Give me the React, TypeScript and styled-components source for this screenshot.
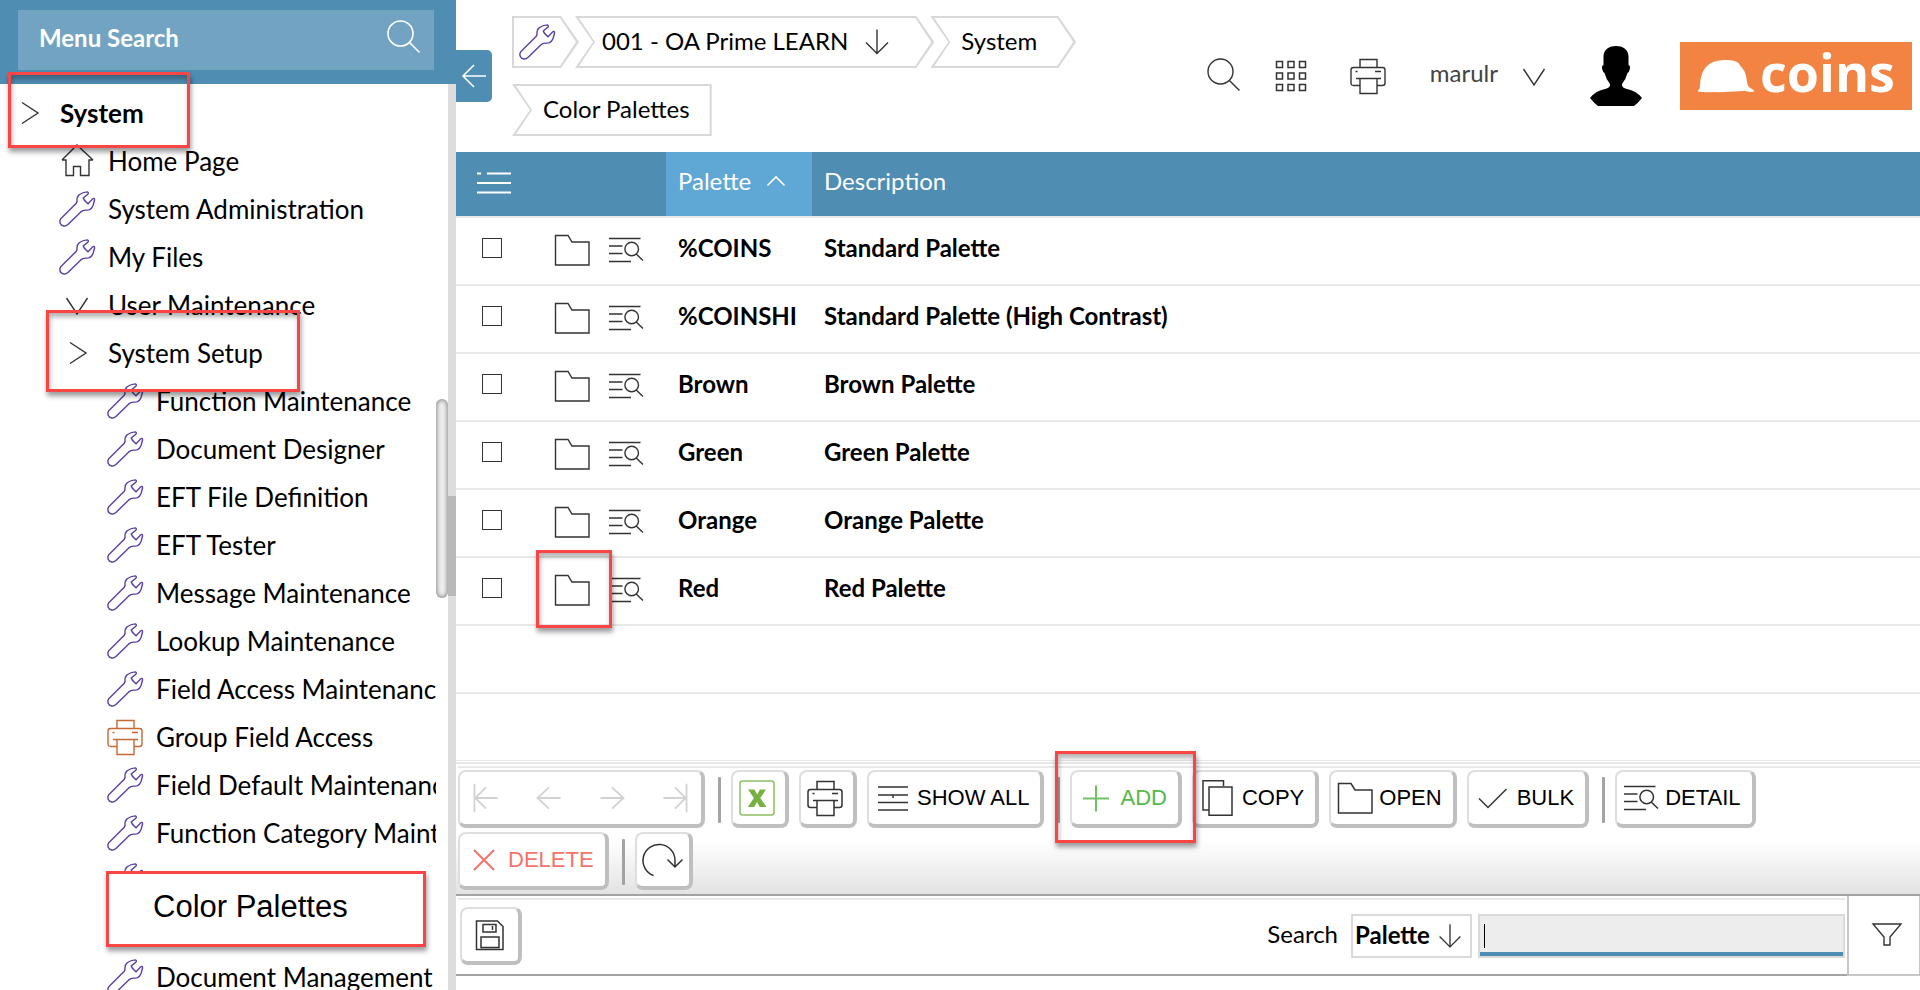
import React from "react";
import styled, { createGlobalStyle, css } from "styled-components";

const blue = "#4f8db3";
const line = "#e8e8e8";
const edge = "#dadada";
const ink = "#333333";
const wrenchPurple = "#5b3fa0";
const ui = `Lato, "Open Sans", sans-serif`;
const plain = `"Liberation Sans", Arial, sans-serif`;

const GlobalStyle = createGlobalStyle`
  *, *::before, *::after { box-sizing: border-box; }
  body { margin: 0; background: #fff; color: #000; font-family: ${ui}; overflow: hidden; }
  button, input, select { font: inherit; color: inherit; margin: 0; }
  button { background: none; border: 0; padding: 0; cursor: pointer; }
  a { color: inherit; text-decoration: none; }
`;

/* ---------- icons ---------- */

type IconName =
  | "wrench" | "home" | "right" | "down" | "search" | "printer" | "grid" | "back"
  | "arrowDown" | "list" | "up" | "folder" | "detail" | "first" | "prev" | "next"
  | "last" | "excel" | "rows" | "plus" | "copy" | "tick" | "cross" | "refresh"
  | "save" | "filter";

const shapes: Record<IconName, React.ReactNode> = {
  wrench: (
    <path d="M2 27.4 L17 12.6 Q18 11.6 18 9.5 Q17.7 6 20.2 3.8 Q23.8 1.2 28.2 .9 Q30 1.4 29 3 L24.3 7 Q24.8 9 29 12.8 L34 7.6 Q35.6 7 35.6 8.8 L34.2 14 Q32.6 18.3 29.6 18.9 L25 19.4 Q23.2 19.6 22 20.8 L9.2 33.2 Q6 36.2 2.6 34.2 Q-.6 31 2 27.4Z" />
  ),
  home: <path d="M3 17 L18 2 L34 17 M3 17 H7 V32.5 H14.5 V23.5 H21.5 V32.5 H30 V17 H34" />,
  right: <path d="M11 7.5 L27 18 L11 28.5" />,
  down: <path d="M7.5 11 L18 27 L28.5 11" />,
  search: <path d="M27 13.5 A12.5 12.5 0 1 1 2 13.5 A12.5 12.5 0 1 1 27 13.5Z M23.4 22.4 L33.5 32.5" />,
  printer: (
    <path d="M10 9.5 V1.5 H27 V9.5 M10 27.5 H3.5 Q1 27.5 1 25 V12 Q1 9.5 3.5 9.5 H32.5 Q35 9.5 35 12 V25 Q35 27.5 32.5 27.5 H27 M6 20.5 H31 M10 20.5 V35.5 H27 V20.5 M5.5 13.5 H7.5 M25 13.5 H31" />
  ),
  grid: (
    <path d="M3.5 3.5 h6 v6 h-6Z M15 3.5 h6 v6 h-6Z M26.5 3.5 h6 v6 h-6Z M3.5 15 h6 v6 h-6Z M15 15 h6 v6 h-6Z M26.5 15 h6 v6 h-6Z M3.5 26.5 h6 v6 h-6Z M15 26.5 h6 v6 h-6Z M26.5 26.5 h6 v6 h-6Z" />
  ),
  back: <path d="M30 18 H7 M18 7 L7 18 L18 29" />,
  arrowDown: <path d="M18 5.5 V29 M7 18.5 L18 29.5 L29 18.5" />,
  list: <path d="M1 8.5 H5 M11 8.5 H35 M1 18 H35 M1 27.5 H35" />,
  up: <path d="M9.5 22.5 L18 14 L26.5 22.5" />,
  folder: <path d="M1.5 3.5 H14 L18 10 H35 V33 H1.5Z" />,
  detail: (
    <path d="M1 6.5 H32.5 M1 14 H14.5 M1 21.5 H14.5 M1 29.5 H23 M30.5 17 A6.8 6.8 0 1 1 16.9 17 A6.8 6.8 0 1 1 30.5 17Z M28.2 22 L35 28.5" />
  ),
  first: <path d="M5 2 V34 M31 18 H6 M18 6 L6 18 L18 30" />,
  prev: <path d="M31 18 H5 M18 6 L5 18 L18 30" />,
  next: <path d="M5 18 H31 M18 6 L31 18 L18 30" />,
  last: <path d="M31 2 V34 M5 18 H30 M18 6 L30 18 L18 30" />,
  excel: (
    <>
      <rect x="1" y="1" width="34" height="34" rx="2.5" stroke="#8cc067" />
      <path d="M9 9.5 H15.5 L18.2 14.4 L21 9.5 H27 L21.3 18 L27.4 27 H20.8 L18 22 L15.2 27 H8.8 L14.9 18Z" fill="#76b043" stroke="none" />
    </>
  ),
  rows: <path d="M3 7 H33 M3 15 H33 M3 22.5 H33 M3 30 H33 M18 15 V18" />,
  plus: <path d="M5 18.5 H31 M18 5.5 V31.5" />,
  copy: <path d="M23.5 6 V.8 H3 V30 H8.5 M9 7 H32 V35.2 H9Z" />,
  tick: <path d="M4 18.5 L13 27.5 L31.5 9" />,
  cross: <path d="M8 8 L28 28 M28 8 L8 28" />,
  refresh: <path d="M10.5 33.5 A16 16 0 1 1 32 18.5 V24.5 M24.5 17.5 L32 25 L39.5 17.5" />,
  save: <path d="M4.5 4 H25.5 L31 9.5 V32.5 H4.5Z M11 7.5 H24 V15 H11Z M20.5 9 V13 M9 20 H27 V30.5 H9Z" />,
  filter: <path d="M4 8 H32 L21 21 V29 H15 V21Z" />,
};

const Svg = styled.svg<{ $size: number }>`
  display: block;
  flex: none;
  width: ${(p) => p.$size}px;
  height: ${(p) => p.$size}px;
  fill: none;
  overflow: visible;
`;

function Icon({ name, color = ink, size = 36, weight = 1.4 }: { name: IconName; color?: string; size?: number; weight?: number }) {
  return (
    <Svg viewBox="0 0 36 36" $size={size} stroke={color} strokeWidth={weight} aria-hidden="true">
      {shapes[name]}
    </Svg>
  );
}

/* ---------- shell ---------- */

const Shell = styled.div`
  display: flex;
  height: 100vh;
  overflow: hidden;
`;

const Sidebar = styled.aside`
  position: relative;
  z-index: 1;
  flex: none;
  width: 456px;
  display: flex;
  flex-direction: column;
`;

const SidebarHead = styled.div`
  background: ${blue};
  padding: 10px 22px 14px 18px;
`;

const MenuSearch = styled.form`
  display: flex;
  align-items: center;
  height: 60px;
  padding: 0 12px 4px 21px;
  background: #73a3c2;
`;

const MenuSearchInput = styled.input`
  flex: 1;
  min-width: 0;
  border: 0;
  padding: 0 0 2px;
  background: none;
  outline: none;
  font-size: 24px;
  font-weight: 700;
  color: #fff;
  &::placeholder { color: #fff; opacity: 1; }
`;

const MenuArea = styled.div`
  display: flex;
  flex: 1;
  min-height: 0;
`;

const MenuList = styled.ul`
  flex: 1;
  min-width: 0;
  margin: 0;
  padding: 5px 0 0;
  list-style: none;
  overflow: hidden;
`;

const MenuLink = styled.a<{ $level: number; $strong?: boolean }>`
  display: flex;
  align-items: center;
  gap: 13px;
  height: 48px;
  padding-left: ${(p) => 11 + p.$level * 48}px;
  font-size: 26px;
  font-weight: ${(p) => (p.$strong ? 700 : 400)};
  white-space: nowrap;
`;

const ScrollTrack = styled.div`
  width: 12px;
  padding-top: 315px;
`;

const ScrollThumb = styled.div`
  height: 199px;
  border-radius: 6px;
  background: #eee;
  box-shadow: inset 0 0 4px 1px #8a8a8a;
`;

const Divider = styled.div`
  width: 8px;
  padding-top: 412px;
  background: #ddd;
`;

const DividerGrip = styled.div`
  height: 100px;
  background: #b9b9b9;
`;

const CollapseTab = styled.button`
  position: absolute;
  left: 100%;
  top: 50px;
  display: flex;
  align-items: center;
  justify-content: center;
  width: 36px;
  height: 52px;
  border-radius: 0 5px 5px 0;
  background: ${blue};
`;

const frame = css`
  border: 3px solid #fa4545;
  box-shadow: 1px 4px 5px rgba(0, 0, 0, 0.4), inset 1px 4px 5px rgba(0, 0, 0, 0.3);
  pointer-events: none;
`;

const Highlight = styled.span<{ $x: number; $y: number; $w: number; $h: number }>`
  position: absolute;
  z-index: 2;
  left: ${(p) => p.$x}px;
  top: ${(p) => p.$y}px;
  width: ${(p) => p.$w}px;
  height: ${(p) => p.$h}px;
  ${frame}
`;

const Callout = styled.a`
  position: absolute;
  left: 106px;
  top: 871px;
  width: 320px;
  height: 76px;
  display: flex;
  align-items: center;
  padding: 0 0 4px 44px;
  background: #fff;
  font-family: ${plain};
  font-size: 31px;
  border: 3px solid #fa4545;
  box-shadow: 1px 4px 5px rgba(0, 0, 0, 0.4);
`;

/* ---------- top bar ---------- */

const Main = styled.main`
  flex: 1;
  min-width: 0;
  display: flex;
  flex-direction: column;
`;

const TopBar = styled.header`
  display: flex;
  align-items: flex-start;
  min-height: 152px;
  padding: 16px 8px 16px 56px;
`;

const Crumbs = styled.nav`
  flex: 1;
  display: flex;
  flex-wrap: wrap;
  row-gap: 16px;
`;

type CrumbKind = "start" | "middle" | "end";

const outline: Record<CrumbKind, string> = {
  start: "0 0, calc(100% - 18px) 0, 100% 50%, calc(100% - 18px) 100%, 0 100%",
  middle: "0 0, calc(100% - 18px) 0, 100% 50%, calc(100% - 18px) 100%, 0 100%, 18px 50%",
  end: "0 0, 100% 0, 100% 100%, 0 100%, 18px 50%",
};
const inner: Record<CrumbKind, string> = {
  start: "2px 2px, calc(100% - 19px) 2px, calc(100% - 3px) 50%, calc(100% - 19px) calc(100% - 2px), 2px calc(100% - 2px)",
  middle: "4px 2px, calc(100% - 19px) 2px, calc(100% - 3px) 50%, calc(100% - 19px) calc(100% - 2px), 4px calc(100% - 2px), 20px 50%",
  end: "4px 2px, calc(100% - 2px) 2px, calc(100% - 2px) calc(100% - 2px), 4px calc(100% - 2px), 20px 50%",
};

const Crumb = styled.a<{ $kind: CrumbKind; $pad: string }>`
  position: relative;
  display: flex;
  align-items: center;
  gap: 11px;
  height: 52px;
  margin-right: -4px;
  padding: ${(p) => p.$pad};
  background: #d8d8d8;
  clip-path: polygon(${(p) => outline[p.$kind]});
  font-size: 24px;
  white-space: nowrap;
  &::before {
    content: "";
    position: absolute;
    inset: 0;
    background: #fff;
    clip-path: polygon(${(p) => inner[p.$kind]});
  }
  & > * { position: relative; }
`;

const CrumbText = styled.span`
  padding-bottom: 4px;
`;

const Tools = styled.div`
  display: flex;
  align-items: center;
  gap: 36px;
  height: 120px;
`;

const ToolButton = styled.button<{ $w: number }>`
  display: flex;
  align-items: center;
  justify-content: center;
  width: ${(p) => p.$w}px;
`;

const UserButton = styled.button`
  display: flex;
  align-items: center;
  gap: 18px;
  font-size: 24px;
  color: #444;
`;

const UserName = styled.span`
  padding-bottom: 8px;
`;

const Logo = styled.a`
  display: flex;
  align-items: center;
  justify-content: center;
  gap: 5px;
  width: 232px;
  height: 68px;
  background: #f38343;
  color: #fff;
  font-family: "Open Sans", "Noto Sans", sans-serif;
  font-size: 52px;
  font-weight: 700;
  line-height: 68px;
`;

const LogoText = styled.span`
  padding-bottom: 8px;
`;

/* ---------- table ---------- */

const GridArea = styled.div`
  border-bottom: 1px solid ${line};
`;

const Table = styled.table`
  width: 100%;
  table-layout: fixed;
  border-collapse: separate;
  border-spacing: 0;
  font-size: 24px;
`;

const HeadCell = styled.th<{ $active?: boolean }>`
  height: 64px;
  padding: 0 0 7px 12px;
  background: ${(p) => (p.$active ? "#5fa8d6" : blue)};
  color: #fff;
  font-weight: 400;
  text-align: left;
`;

const OptionsHeadCell = styled(HeadCell)`
  padding: 0 0 2px 20px;
`;

const OptionsButton = styled.button`
  display: block;
`;

const SortButton = styled.button`
  display: flex;
  align-items: center;
  gap: 7px;
`;

const Cell = styled.td`
  height: 68px;
  padding: 0 0 7px 12px;
  border-top: 2px solid ${line};
  font-weight: 700;
  white-space: nowrap;
`;

const CheckCell = styled(Cell)`
  padding-left: 26px;
`;

const ActionsCell = styled(Cell)`
  padding: 0 0 3px 14px;
`;

const Check = styled.input`
  appearance: none;
  display: block;
  width: 20px;
  height: 20px;
  border: 1px solid #333;
  background: #fff;
  &:checked { background: ${blue}; }
`;

const RowActions = styled.div`
  display: flex;
  align-items: center;
  gap: 18px;
`;

const Anchor = styled.div`
  position: relative;
  display: flex;
`;

/* ---------- button bar ---------- */

const Toolbar = styled.div`
  margin-top: 1px;
  padding: 2px 0 4px 2px;
  border-top: 2px solid ${line};
  border-bottom: 2px solid #a3a3a3;
  background: linear-gradient(#fff 58%, #e3e3e3);
`;

const ToolbarItems = styled.div`
  display: flex;
  flex-wrap: wrap;
  gap: 4px 10px;
  padding: 2px 20px 0 0;
  border-top: 2px solid ${line};
`;

const raised = css`
  height: 58px;
  border: solid;
  border-width: 2px 4px 4px 2px;
  border-color: #dedede #bfbfbf #bfbfbf #dedede;
  border-radius: 8px;
  background: #fff;
`;

const PushButton = styled.button<{ $tone?: string; $wide?: boolean }>`
  ${raised}
  display: flex;
  align-items: center;
  gap: 6px;
  padding: 0 10px 0 ${(p) => (p.$wide ? 10 : 6)}px;
  font-family: ${plain};
  font-size: 22px;
  color: ${(p) => p.$tone ?? "#000"};
  white-space: nowrap;
`;

const PushText = styled.span`
  padding-right: 1px;
`;

const Pager = styled.div`
  ${raised}
  display: flex;
  gap: 11px;
`;

const PagerButton = styled.button`
  display: flex;
  align-items: center;
  justify-content: center;
  width: 52px;
`;

const Separator = styled.span`
  width: 3px;
  height: 46px;
  margin: 7px 0 0 3px;
  background: #a3a3a3;
  border-radius: 1px;
`;

/* ---------- search bar ---------- */

const SearchBar = styled.div`
  display: flex;
  height: 80px;
`;

const SearchMain = styled.div`
  flex: 1;
  padding: 2px 2px 0;
  border-bottom: 2px solid #a3a3a3;
`;

const SearchRow = styled.form`
  display: flex;
  align-items: center;
  height: 100%;
  padding: 0 0 2px 2px;
  border-top: 2px solid ${line};
`;

const SearchLabel = styled.label`
  margin: 0 13px 6px auto;
  font-size: 24px;
`;

const SelectBox = styled.div`
  position: relative;
  margin-right: 6px;
`;

const FieldSelect = styled.select`
  appearance: none;
  display: block;
  width: 121px;
  height: 44px;
  padding: 0 0 4px 2px;
  border: 2px solid ${edge};
  border-radius: 0;
  background: #fff;
  font-size: 24px;
  font-weight: 700;
`;

const SelectArrow = styled.span`
  position: absolute;
  right: 5px;
  top: 5px;
  pointer-events: none;
`;

const SearchField = styled.div`
  position: relative;
  width: 367px;
  height: 44px;
  border: 2px solid ${edge};
  background: #ededed;
`;

const SearchInput = styled.input`
  display: block;
  width: 100%;
  height: 40px;
  padding: 0 4px;
  border: 0;
  border-bottom: 4px solid ${blue};
  background: none;
  outline: none;
  caret-color: transparent;
  font-size: 24px;
`;

const Caret = styled.span`
  position: absolute;
  left: 4px;
  top: 8px;
  width: 1px;
  height: 24px;
  background: #000;
`;

const FilterCell = styled.button`
  display: flex;
  align-items: center;
  justify-content: center;
  width: 73px;
  padding: 0 0 2px 6px;
  border: solid #c6c6c6;
  border-width: 0 1px 2px 2px;
`;

/* ---------- data ---------- */

type MenuItem = { text?: string; level: number; icon: IconName; color?: string; strong?: boolean };

const orange = "#c46a35";
const menu: MenuItem[] = [
  { text: "System", level: 0, icon: "right", strong: true },
  { text: "Home Page", level: 1, icon: "home" },
  { text: "System Administration", level: 1, icon: "wrench" },
  { text: "My Files", level: 1, icon: "wrench" },
  { text: "User Maintenance", level: 1, icon: "down" },
  { text: "System Setup", level: 1, icon: "right" },
  { text: "Function Maintenance", level: 2, icon: "wrench" },
  { text: "Document Designer", level: 2, icon: "wrench" },
  { text: "EFT File Definition", level: 2, icon: "wrench" },
  { text: "EFT Tester", level: 2, icon: "wrench" },
  { text: "Message Maintenance", level: 2, icon: "wrench" },
  { text: "Lookup Maintenance", level: 2, icon: "wrench" },
  { text: "Field Access Maintenance", level: 2, icon: "wrench" },
  { text: "Group Field Access", level: 2, icon: "printer", color: orange },
  { text: "Field Default Maintenance", level: 2, icon: "wrench" },
  { text: "Function Category Maintenance", level: 2, icon: "wrench" },
  { level: 2, icon: "wrench" },
  { level: 2, icon: "wrench" },
  { text: "Document Management", level: 2, icon: "wrench" },
];

const palettes = [
  { code: "%COINS", name: "Standard Palette" },
  { code: "%COINSHI", name: "Standard Palette (High Contrast)" },
  { code: "Brown", name: "Brown Palette" },
  { code: "Green", name: "Green Palette" },
  { code: "Orange", name: "Orange Palette" },
  { code: "Red", name: "Red Palette" },
];

/* ---------- parts ---------- */

function Push({ icon, text, label, tone, wide, iconColor }: { icon: IconName; text?: string; label?: string; tone?: string; wide?: boolean; iconColor?: string }) {
  return (
    <PushButton type="button" aria-label={label} $tone={tone} $wide={wide}>
      <Icon name={icon} color={iconColor ?? tone ?? ink} weight={tone ? 2 : 1.5} />
      {text && <PushText>{text}</PushText>}
    </PushButton>
  );
}

function SideMenu() {
  return (
    <Sidebar>
      <SidebarHead>
        <MenuSearch onSubmit={(e) => e.preventDefault()}>
          <MenuSearchInput placeholder="Menu Search" aria-label="Menu Search" />
          <button type="submit" aria-label="Search menu">
            <Icon name="search" color="#fff" weight={1.6} />
          </button>
        </MenuSearch>
      </SidebarHead>
      <MenuArea>
        <MenuList>
          {menu.map((m, i) => (
            <li key={i} aria-hidden={m.text ? undefined : true}>
              <MenuLink href="#" $level={m.level} $strong={m.strong} tabIndex={m.text ? undefined : -1}>
                <Icon name={m.icon} color={m.color ?? (m.icon === "wrench" ? wrenchPurple : ink)} />
                {m.text && <span>{m.text}</span>}
              </MenuLink>
            </li>
          ))}
        </MenuList>
        <ScrollTrack>
          <ScrollThumb />
        </ScrollTrack>
        <Divider>
          <DividerGrip />
        </Divider>
      </MenuArea>
      <CollapseTab type="button" aria-label="Collapse menu">
        <Icon name="back" color="#fff" weight={1.6} />
      </CollapseTab>
      <Highlight $x={8} $y={72} $w={182} $h={76} />
      <Highlight $x={46} $y={310} $w={254} $h={82} />
      <Callout href="#">Color Palettes</Callout>
    </Sidebar>
  );
}

function Header() {
  return (
    <TopBar>
      <Crumbs aria-label="Breadcrumb">
        <Crumb href="#" $kind="start" $pad="0 24px 0 7px" aria-label="Maintenance">
          <Icon name="wrench" color={wrenchPurple} />
        </Crumb>
        <Crumb href="#" $kind="middle" $pad="0 39px 0 27px">
          <CrumbText>001 - OA Prime LEARN</CrumbText>
          <Icon name="arrowDown" />
        </Crumb>
        <Crumb href="#" $kind="middle" $pad="0 39px 0 31px">
          <CrumbText>System</CrumbText>
        </Crumb>
        <Crumb href="#" $kind="end" $pad="0 22px 0 31px">
          <CrumbText>Color Palettes</CrumbText>
        </Crumb>
      </Crumbs>
      <Tools>
        <ToolButton type="button" $w={32} aria-label="Search">
          <Icon name="search" />
        </ToolButton>
        <ToolButton type="button" $w={30} aria-label="Applications">
          <Icon name="grid" weight={1.5} />
        </ToolButton>
        <ToolButton type="button" $w={52} aria-label="Print">
          <Icon name="printer" />
        </ToolButton>
        <UserButton type="button">
          <UserName>marulr</UserName>
          <Icon name="down" />
        </UserButton>
        <ToolButton type="button" $w={56} aria-label="Profile">
          <svg width="54" height="60" viewBox="0 0 54 60" aria-hidden="true">
            <path
              d="M27 0 C35 0 39.5 4 39.5 11 V19 Q42 20 40.5 24 Q40 26.5 38.5 27 Q37 33 33 38 Q32.5 42 38 43 Q47 44.5 53 52 Q49 57 45 60 H9 Q5 57 1 52 Q7 44.5 16 43 Q21.5 42 21 38 Q17 33 15.5 27 Q14 26.5 13.5 24 Q12 20 14.5 19 V11 C14.5 4 19 0 27 0Z"
              fill="#000"
            />
          </svg>
        </ToolButton>
        <Logo href="#">
          <svg width="58" height="34" viewBox="0 0 58 34" aria-hidden="true">
            <path
              d="M1 31.5 Q3 30 3 27 Q3 15 9 8 Q15 1 28 1 Q37 .5 41.5 4 Q44 8 45.5 9.5 Q49 13 50 23 Q50.5 27 52 28 Q55 30 57.5 32 Q56 33.2 52 32.8 Q49 31.8 45 32 Q27 33.5 15 33 Q8 33.6 1 32.5Z"
              fill="#fff"
            />
          </svg>
          <LogoText>coins</LogoText>
        </Logo>
      </Tools>
    </TopBar>
  );
}

function PaletteTable() {
  return (
    <GridArea>
      <Table>
        <colgroup>
          <col width="84" />
          <col width="126" />
          <col width="146" />
          <col />
        </colgroup>
        <thead>
          <tr>
            <OptionsHeadCell>
              <OptionsButton type="button" aria-label="Table options">
                <Icon name="list" color="#fff" weight={2} />
              </OptionsButton>
            </OptionsHeadCell>
            <HeadCell />
            <HeadCell $active aria-sort="ascending">
              <SortButton type="button">
                Palette
                <Icon name="up" color="#fff" weight={1.6} />
              </SortButton>
            </HeadCell>
            <HeadCell>Description</HeadCell>
          </tr>
        </thead>
        <tbody>
          {palettes.map((p) => (
            <tr key={p.code}>
              <CheckCell>
                <Check type="checkbox" aria-label={`Select ${p.code}`} />
              </CheckCell>
              <ActionsCell>
                <RowActions>
                  <Anchor>
                    <button type="button" aria-label={`Open ${p.code}`}>
                      <Icon name="folder" />
                    </button>
                    {p.code === "Red" && <Highlight $x={-18} $y={-22} $w={76} $h={78} />}
                  </Anchor>
                  <button type="button" aria-label={`Detail of ${p.code}`}>
                    <Icon name="detail" />
                  </button>
                </RowActions>
              </ActionsCell>
              <Cell>{p.code}</Cell>
              <Cell>{p.name}</Cell>
            </tr>
          ))}
          <tr><Cell colSpan={4} /></tr>
          <tr><Cell colSpan={4} /></tr>
        </tbody>
      </Table>
    </GridArea>
  );
}

const pagerSteps: { icon: IconName; label: string }[] = [
  { icon: "first", label: "First" },
  { icon: "prev", label: "Previous" },
  { icon: "next", label: "Next" },
  { icon: "last", label: "Last" },
];

function ActionBar() {
  return (
    <Toolbar>
      <ToolbarItems>
        <Pager>
          {pagerSteps.map((s) => (
            <PagerButton type="button" key={s.label} aria-label={s.label} disabled>
              <Icon name={s.icon} color="#d2d2d2" size={32} weight={2} />
            </PagerButton>
          ))}
        </Pager>
        <Separator />
        <Push icon="excel" label="Export to Excel" />
        <Push icon="printer" label="Print list" />
        <Push icon="rows" text="SHOW ALL" />
        <Separator />
        <Anchor>
          <Push icon="plus" text="ADD" tone="#54b948" iconColor="#6fc266" />
          <Highlight $x={-15} $y={-19} $w={141} $h={92} />
        </Anchor>
        <Push icon="copy" text="COPY" />
        <Push icon="folder" text="OPEN" />
        <Push icon="tick" text="BULK" />
        <Separator />
        <Push icon="detail" text="DETAIL" />
        <Push icon="cross" text="DELETE" tone="#f4736a" />
        <Separator />
        <Push icon="refresh" label="Refresh" />
      </ToolbarItems>
    </Toolbar>
  );
}

function SearchPanel() {
  return (
    <SearchBar>
      <SearchMain>
        <SearchRow onSubmit={(e) => e.preventDefault()}>
          <Push icon="save" label="Save" wide />
          <SearchLabel htmlFor="search-field">Search</SearchLabel>
          <SelectBox>
            <FieldSelect id="search-field" defaultValue="Palette">
              <option>Palette</option>
              <option>Description</option>
            </FieldSelect>
            <SelectArrow>
              <Icon name="arrowDown" size={34} />
            </SelectArrow>
          </SelectBox>
          <SearchField>
            <SearchInput aria-label="Search text" />
            <Caret />
          </SearchField>
        </SearchRow>
      </SearchMain>
      <FilterCell type="button" aria-label="Filter">
        <Icon name="filter" />
      </FilterCell>
    </SearchBar>
  );
}

export default function App() {
  return (
    <Shell>
      <GlobalStyle />
      <SideMenu />
      <Main>
        <Header />
        <PaletteTable />
        <ActionBar />
        <SearchPanel />
      </Main>
    </Shell>
  );
}
